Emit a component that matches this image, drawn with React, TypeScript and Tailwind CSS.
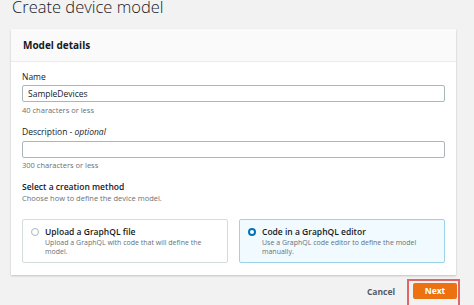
import { useState } from 'react';

type Method = 'upload' | 'editor';

const methods: { id: Method; title: string; desc: string }[] = [
  { id: 'upload', title: 'Upload a GraphQL file', desc: 'Upload a GraphQL with code that will define the model.' },
  { id: 'editor', title: 'Code in a GraphQL editor', desc: 'Use a GraphQL code editor to define the model manually.' },
];

export default function App() {
  const [name, setName] = useState('SampleDevices');
  const [description, setDescription] = useState('');
  const [method, setMethod] = useState<Method>('editor');

  return (
    <div
      className="h-[305px] w-[474px] overflow-hidden bg-[#f2f2f2] pl-[11px] pr-[18px] text-[#16191f]"
      style={{ fontFamily: '"Open Sans", "Noto Sans", sans-serif' }}
    >
      <h1 className="-mt-[3px] mb-[12px] pl-px text-[16.5px] font-light leading-[20px] text-[#16191f]">
        Create device model
      </h1>

      <div className="bg-white shadow-[0_1px_2px_rgba(0,0,0,0.2)]">
        <div className="flex h-[33px] items-center border-b border-[#eaeded] bg-[#fafafa] px-[12px]">
          <h2 className="text-[10px] font-bold">Model details</h2>
        </div>

        <div className="px-[11px] pb-[12px] pt-[9px]">
          <label className="block text-[8.5px] leading-[12px]">Name</label>
          <input
            value={name}
            onChange={(e) => setName(e.target.value)}
            className="mt-[2px] block h-[17px] w-full rounded-[2px] border border-[#aab7b8] px-[5px] text-[8.5px] outline-none"
          />
          <p className="mt-[3px] text-[7.5px] leading-[10px] text-[#687078]">40 characters or less</p>

          <label className="mt-[11px] block text-[8.5px] leading-[12px]">
            Description - <i>optional</i>
          </label>
          <input
            value={description}
            onChange={(e) => setDescription(e.target.value)}
            className="mt-[3px] block h-[17px] w-full rounded-[2px] border border-[#aab7b8] px-[5px] text-[8.5px] outline-none"
          />
          <p className="mt-[2px] text-[7.5px] leading-[10px] text-[#687078]">300 characters or less</p>

          <p className="mt-[11px] text-[8.5px] font-semibold leading-[12px]">Select a creation method</p>
          <p className="text-[7.5px] leading-[10px] text-[#687078]">Choose how to define the device model.</p>

          <div className="mt-[16px] grid grid-cols-2 gap-[11px]">
            {methods.map((m) => {
              const selected = method === m.id;
              return (
                <button
                  key={m.id}
                  onClick={() => setMethod(m.id)}
                  className={`flex h-[44px] items-start gap-[6px] rounded-[2px] border pl-[8px] pr-[6px] pt-[6px] text-left ${
                    selected ? 'border-[#99d5e6] bg-[#f1faff]' : 'border-[#d5dbdb] bg-white'
                  }`}
                >
                  <span
                    className={`mt-[2px] h-[8px] w-[8px] shrink-0 rounded-full ${
                      selected ? 'border-[2.5px] border-[#0073bb] bg-white' : 'border border-[#aab7b8] bg-white'
                    }`}
                  />
                  <span>
                    <span className="block text-[8.5px] font-semibold leading-[12px]">{m.title}</span>
                    <span className="block text-[7px] leading-[9px] text-[#687078]">{m.desc}</span>
                  </span>
                </button>
              );
            })}
          </div>
        </div>
      </div>

      <div className="-mr-[4px] mt-[4px] flex items-center justify-end gap-[12px]">
        <button className="pb-[4px] text-[8.5px] font-bold text-[#545b64]">Cancel</button>
        <div className="border-2 border-[#e06666] pb-[8px] pl-[4px] pr-[1px] pt-[2px]">
          <button className="block h-[16px] w-[44px] rounded-[2px] bg-[#ec7211] text-[8.5px] font-bold leading-[16px] text-white">
            Next
          </button>
        </div>
      </div>
    </div>
  );
}
